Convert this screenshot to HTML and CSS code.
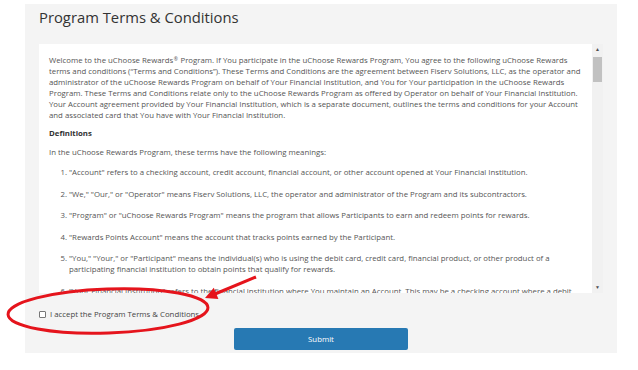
FILE: index.html
```html
<!DOCTYPE html>
<html lang="en">
<head>
  <meta charset="UTF-8" />
  <meta name="viewport" content="width=device-width, initial-scale=1.0"/>
  <title>Program Terms &amp; Conditions</title>
  <link rel="stylesheet" href="styles.css">
</head>
<body>
  <div class="panel">
    <h1>Program Terms &amp; Conditions</h1>
    <div class="terms-box">
      <div class="terms-text">
        <p class="intro">Welcome to the uChoose Rewards<span class="reg">®</span> Program. If You participate in the uChoose Rewards Program, You agree to the following uChoose Rewards terms and conditions (“Terms and Conditions”). These Terms and Conditions are the agreement between Fiserv Solutions, LLC, as the operator and administrator of the uChoose Rewards Program on behalf of Your Financial Institution, and You for Your participation in the uChoose Rewards Program. These Terms and Conditions relate only to the uChoose Rewards Program as offered by Operator on behalf of Your Financial Institution. Your Account agreement provided by Your Financial Institution, which is a separate document, outlines the terms and conditions for your Account and associated card that You have with Your Financial Institution.</p>
        <p class="heading">Definitions</p>
        <p>In the uChoose Rewards Program, these terms have the following meanings:</p>
        <ol>
          <li>"Account" refers to a checking account, credit account, financial account, or other account opened at Your Financial Institution.</li>
          <li>"We," "Our," or "Operator" means Fiserv Solutions, LLC, the operator and administrator of the Program and its subcontractors.</li>
          <li>"Program" or "uChoose Rewards Program" means the program that allows Participants to earn and redeem points for rewards.</li>
          <li>"Rewards Points Account" means the account that tracks points earned by the Participant.</li>
          <li>"You," "Your," or "Participant" means the individual(s) who is using the debit card, credit card, financial product, or other product of a participating financial institution to obtain points that qualify for rewards.</li>
          <li>"Your Financial Institution" refers to the financial institution where You maintain an Account. This may be a checking account where a debit card is issued, or a credit account where a credit card is issued.</li>
        </ol>
      </div>
      <div class="scrollbar">
        <span class="arrow">&#9650;</span>
        <div class="track"><div class="thumb"></div></div>
        <span class="arrow">&#9660;</span>
      </div>
    </div>
    <label class="accept">
      <input type="checkbox" />
      <span>I accept the Program Terms &amp; Conditions</span>
    </label>
    <div class="actions">
      <button type="button">Submit</button>
    </div>
  </div>

  <!-- red markup drawn over the screenshot -->
  <svg class="markup" width="638" height="370" viewBox="0 0 638 370">
    <ellipse cx="108" cy="311" rx="100" ry="22" transform="rotate(-2 108 311)" fill="none" stroke="#e5141c" stroke-width="3"/>
    <line x1="256" y1="277" x2="215" y2="294" stroke="#e5141c" stroke-width="3"/>
    <polygon points="205,298 218.4,299 213.8,287.8" fill="#e5141c"/>
  </svg>
</body>
</html>
```

FILE: styles.css
```css
body {
  margin: 0;
  font-family: 'Open Sans', sans-serif;
  background: #fff;
  color: #555;
}
.panel {
  position: relative;
  margin: 4px 0 0 25px;
  width: 592px;
  height: 349px;
  background: #f4f4f4;
  padding: 0 14px;
  box-sizing: border-box;
}
h1 {
  margin: 0;
  padding-top: 2px;
  height: 40px;
  box-sizing: border-box;
  font-size: 14.8px;
  font-weight: 400;
  line-height: 22px;
  color: #333;
}
.terms-box {
  display: flex;
  width: 564px;
  height: 249px;
}
.terms-text {
  flex: 1;
  overflow: hidden;
  background: #fff;
  padding: 11px 10px 0 10px;
  font-size: 7.8px;
  line-height: 11px;
}
.terms-text p {
  margin: 0 0 8px;
}
.terms-text .intro {
  margin-bottom: 7px;
}
.terms-text .reg {
  font-size: 5px;
  vertical-align: 2px;
  line-height: 5px;
  margin: 0 0.5px;
}
.terms-text .heading {
  font-weight: 700;
  color: #333;
}
.terms-text ol {
  margin: 9px 0 0;
  padding-left: 20px;
}
.terms-text li {
  margin-bottom: 10.5px;
}
.scrollbar {
  width: 11px;
  display: flex;
  flex-direction: column;
  background: #f1f1f1;
}
.scrollbar .arrow {
  height: 11px;
  font-size: 5px;
  line-height: 11px;
  text-align: center;
  color: #505050;
}
.scrollbar .track {
  flex: 1;
  padding: 2px 1px;
}
.scrollbar .thumb {
  height: 25px;
  background: #c1c1c1;
}
.accept {
  display: flex;
  align-items: center;
  gap: 4px;
  height: 24px;
  margin-top: 9px;
  font-size: 7.8px;
  color: #444;
}
.accept input {
  appearance: none;
  margin: 0;
  width: 7px;
  height: 7px;
  border: 1px solid #777;
  border-radius: 1px;
  background: #fff;
  box-sizing: border-box;
}
.actions {
  display: flex;
  justify-content: center;
  margin-top: 2px;
}
.actions button {
  width: 174px;
  height: 22px;
  border: none;
  border-radius: 2px;
  background: #2779b3;
  color: #fff;
  font-family: 'Open Sans', sans-serif;
  font-size: 7.8px;
}
.markup {
  position: absolute;
  top: 0;
  left: 0;
  pointer-events: none;
}
```
